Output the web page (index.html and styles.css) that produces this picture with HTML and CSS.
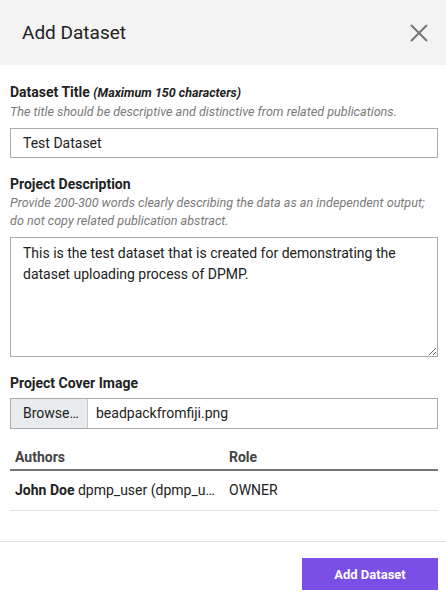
FILE: index.html
```html
<!DOCTYPE html>
<html>
<head>
<meta charset="utf-8">
<link rel="stylesheet" href="styles.css">
</head>
<body>
<div class="modal">
  <div class="modal-header">
    <h1 class="modal-title">Add Dataset</h1>
    <button class="close" aria-label="Close">
      <svg width="18" height="18" viewBox="0 0 18 18"><path d="M1 1L17 17M17 1L1 17" stroke="#767676" stroke-width="2" fill="none"/></svg>
    </button>
  </div>
  <div class="modal-body">
    <div class="label">Dataset Title <em class="label-note">(Maximum 150 characters)</em></div>
    <div class="hint">The title should be descriptive and distinctive from related publications.</div>
    <div class="input">Test Dataset</div>

    <div class="label gap">Project Description</div>
    <div class="hint">Provide 200-300 words clearly describing the data as an independent output; do not copy related publication abstract.</div>
    <textarea class="textarea">This is the test dataset that is created for demonstrating the dataset uploading process of DPMP.</textarea>

    <div class="label gap">Project Cover Image</div>
    <div class="file">
      <span class="browse">Browse…</span>
      <span class="filename">beadpackfromfiji.png</span>
    </div>

    <table class="authors">
      <thead>
        <tr><th>Authors</th><th>Role</th></tr>
      </thead>
      <tbody>
        <tr><td><div class="trunc"><strong>John Doe</strong> dpmp_user (dpmp_user@example.com)</div></td><td>OWNER</td></tr>
      </tbody>
    </table>
  </div>
  <div class="modal-footer">
    <button class="primary">Add Dataset</button>
  </div>
</div>
</body>
</html>
```
FILE: styles.css
```css
* { box-sizing: border-box; }
html, body { margin: 0; padding: 0; background: #fff; }
body { font-family: Roboto, "Liberation Sans", sans-serif; color: #212529; font-size: 14px; }

.modal { width: 446px; }

.modal-header {
  height: 65px;
  background: #f3f3f3;
  display: flex;
  align-items: center;
  justify-content: space-between;
  padding: 0 18px 0 22px;
}
.modal-title { margin: 0; font-size: 19px; font-weight: 400; color: #222; line-height: 24px; }
.close { background: none; border: 0; padding: 0; width: 18px; height: 18px; display: flex; cursor: pointer; }

.modal-body { padding: 17px 8px 30px 10px; }

.label { font-weight: 700; font-size: 14px; line-height: 20px; color: #222; }
.label.gap { margin-top: 16px; }
.label-note { font-size: 12.5px; font-weight: 700; }
.hint { font-style: italic; font-size: 12.6px; line-height: 18px; color: #7a7a7a; }

.input {
  margin-top: 7px;
  height: 30px;
  border: 1px solid #ababab;
  padding: 0 12px;
  line-height: 28px;
  font-size: 14px;
  color: #222;
}

.textarea {
  display: block;
  margin: 7px 0 0;
  width: 100%;
  height: 120px;
  border: 1px solid #ababab;
  border-radius: 0;
  padding: 5px 12px;
  font-family: Roboto, "Liberation Sans", sans-serif;
  font-size: 14px;
  line-height: 21px;
  color: #222;
  resize: vertical;
  outline: none;
}

.file {
  margin-top: 5px;
  height: 31px;
  border: 1px solid #ababab;
  display: flex;
  align-items: stretch;
  font-size: 14px;
  color: #222;
}
.browse {
  width: 77px;
  background: #e9ecef;
  border-right: 1px solid #c8c8c8;
  padding-left: 12px;
  line-height: 29px;
}
.filename { padding-left: 8px; line-height: 29px; }

.authors {
  margin-top: 10px;
  width: 100%;
  border-collapse: collapse;
  table-layout: fixed;
  font-size: 14px;
}
.authors th {
  text-align: left;
  font-weight: 700;
  color: #444;
  padding: 8px 5px 2px;
  line-height: 20px;
  border-bottom: 2px solid #777;
}
.authors td {
  padding: 9px 5px 10px;
  line-height: 20px;
  border-bottom: 1px solid #e2e2e2;
  color: #222;
}
.trunc { white-space: nowrap; overflow: hidden; text-overflow: ellipsis; }

.modal-footer {
  border-top: 1px solid #dedede;
  display: flex;
  justify-content: flex-end;
  padding: 16px 8px 10px;
}
.primary {
  width: 136px;
  height: 32px;
  background: #7a4fe6;
  color: #fff;
  border: 0;
  font-family: Roboto, "Liberation Sans", sans-serif;
  font-weight: 700;
  font-size: 13px;
}
```
